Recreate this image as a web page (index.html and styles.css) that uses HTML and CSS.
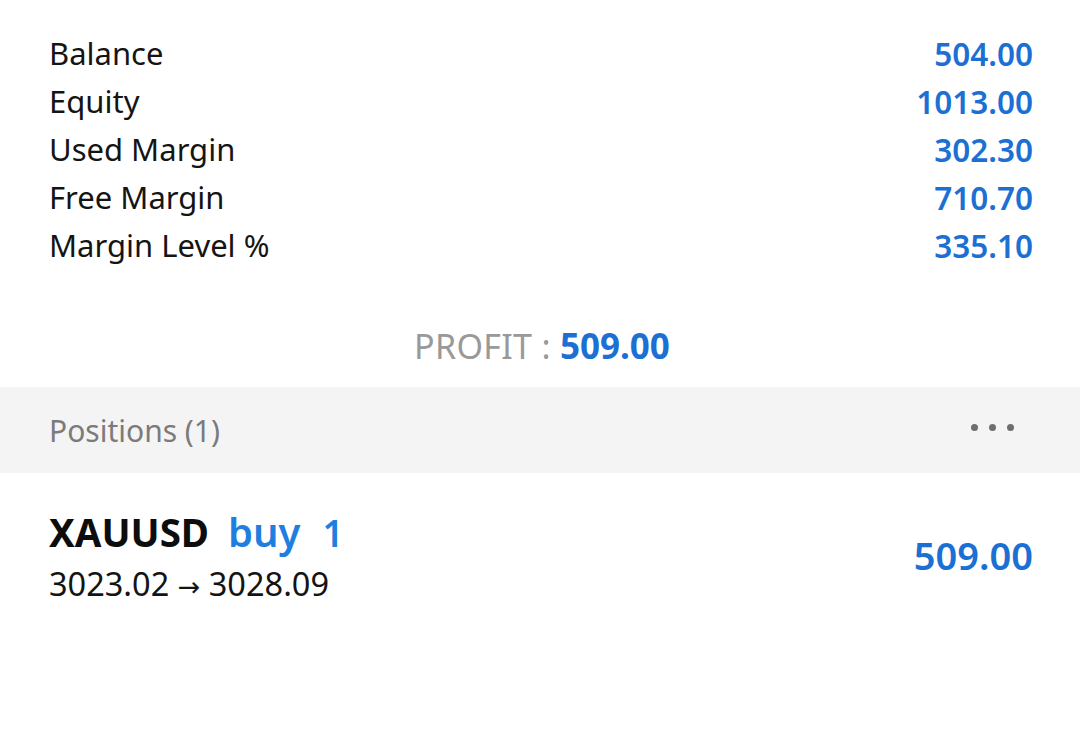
FILE: index.html
```html
<!DOCTYPE html>
<html>
<head>
<meta charset="utf-8">
<link rel="stylesheet" href="styles.css">
</head>
<body>
<div class="page">
  <div class="summary">
    <div class="row"><span class="label">Balance</span><span class="value">504.00</span></div>
    <div class="row"><span class="label">Equity</span><span class="value">1013.00</span></div>
    <div class="row"><span class="label">Used Margin</span><span class="value">302.30</span></div>
    <div class="row"><span class="label">Free Margin</span><span class="value">710.70</span></div>
    <div class="row"><span class="label">Margin Level %</span><span class="value">335.10</span></div>
  </div>
  <div class="profit"><span class="profit-label">PROFIT : </span><span class="profit-value">509.00</span></div>
  <div class="section-head">
    <span class="section-title">Positions (1)</span>
    <span class="dots"><i></i><i></i><i></i></span>
  </div>
  <div class="position">
    <div class="pos-left">
      <div class="pos-title"><span class="symbol">XAUUSD</span><span class="side">buy</span><span class="vol">1</span></div>
      <div class="pos-prices">3023.02 <span class="arrow">→</span> 3028.09</div>
    </div>
    <div class="pos-profit">509.00</div>
  </div>
</div>
</body>
</html>
```
FILE: styles.css
```css
html, body {
  margin: 0;
  padding: 0;
  background: #ffffff;
}
body {
  font-family: "Noto Sans", "Open Sans", sans-serif;
  color: #111111;
}
.page {
  width: 1080px;
  height: 756px;
  overflow: hidden;
}
.summary {
  padding: 29px 47px 0 49px;
}
.row {
  display: flex;
  justify-content: space-between;
  align-items: center;
  height: 48px;
}
.label {
  font-size: 31px;
  color: #141414;
}
.value {
  font-size: 31.5px;
  font-weight: 600;
  color: #1c6fd3;
}
.profit {
  text-align: center;
  margin-top: 57px;
  height: 40px;
  line-height: 40px;
  padding-left: 4px;
}
.profit-label {
  font-size: 34px;
  color: #999999;
  letter-spacing: 0.3px;
}
.profit-value {
  font-size: 35px;
  font-weight: 700;
  color: #1c6fd3;
}
.section-head {
  margin-top: 21px;
  height: 86px;
  background: #f4f4f4;
  display: flex;
  align-items: center;
  justify-content: space-between;
  padding: 0 66px 0 49px;
}
.section-title {
  font-size: 30px;
  color: #7b7b7b;
}
.dots {
  display: flex;
  gap: 11px;
  margin-top: -6px;
}
.dots i {
  width: 7px;
  height: 7px;
  border-radius: 50%;
  background: #6e6e6e;
}
.position {
  display: flex;
  justify-content: space-between;
  align-items: center;
  padding: 33px 47px 0 49px;
}
.pos-title {
  display: flex;
  align-items: baseline;
  height: 52px;
  line-height: 52px;
}
.symbol {
  font-size: 38.5px;
  font-weight: 700;
  color: #0d0d0d;
}
.side {
  font-size: 40px;
  font-weight: 600;
  color: #1f7fe0;
  margin-left: 19px;
}
.vol {
  font-size: 37px;
  font-weight: 600;
  color: #1f7fe0;
  margin-left: 22px;
}
.pos-prices {
  font-size: 32.5px;
  color: #141414;
  line-height: 40px;
  margin-top: 6px;
}
.arrow {
  font-family: "DejaVu Sans", sans-serif;
  font-size: 27px;
}
.pos-profit {
  font-size: 38px;
  font-weight: 600;
  color: #1c6fd3;
  margin-top: -4px;
}
```
